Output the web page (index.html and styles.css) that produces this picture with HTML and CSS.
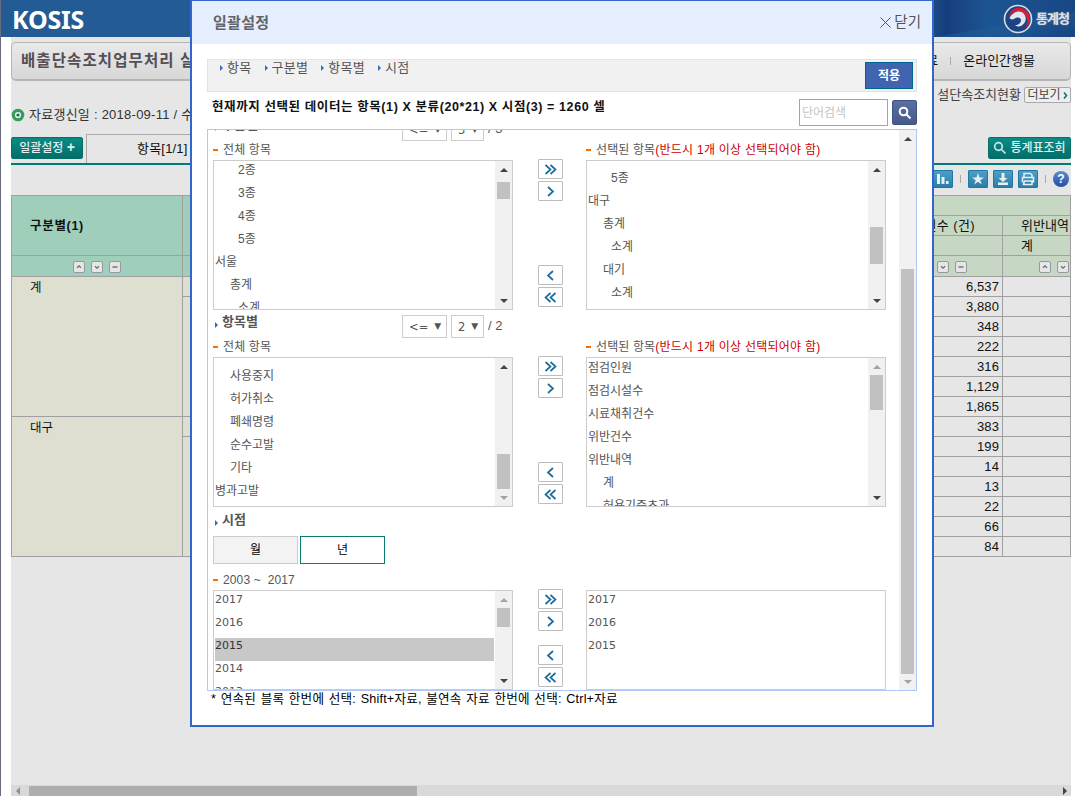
FILE: index.html
```html
<!DOCTYPE html>
<html lang="ko">
<head>
<meta charset="utf-8">
<title>KOSIS 일괄설정</title>
<link rel="stylesheet" href="styles.css">
</head>
<body>
<svg class="defs" width="0" height="0" aria-hidden="true">
  <symbol id="next" viewBox="0 0 13 13"><path d="M4 2l5 4.500-5 4.500"/></symbol>
  <symbol id="nextall" viewBox="0 0 13 13"><path d="M1.500 2l5 4.500-5 4.500M6.500 2l5 4.500-5 4.500"/></symbol>
  <symbol id="prev" viewBox="0 0 13 13"><path d="M9 2L4 6.500 9 11"/></symbol>
  <symbol id="prevall" viewBox="0 0 13 13"><path d="M6.500 2l-5 4.500 5 4.500M11.500 2l-5 4.500 5 4.500"/></symbol>
  <symbol id="lens" viewBox="0 0 14 14"><circle cx="5.500" cy="5.500" r="3.800"/><path d="M8.500 8.500L12.500 12.500"/></symbol>
</svg>
<div class="page">
  <header class="top">
    <span class="logo">KOSIS</span>
    <div class="agency">
      <svg width="30" height="30" viewBox="0 0 30 30"><circle cx="15" cy="15" r="13.500" fill="#1c4485" stroke="#d9dce2" stroke-width="1.600"/><path d="M6 13C7 6 13 3 18 4c6 1 9 6 9 11 0 4-2 7-5 9 3-5 3-9 0-13-4-5-11-5-16 2z" fill="#d32035"/><path d="M6.500 14c3-6 9-8 13-5.500 4 3 4 8 1.500 11-2.500 3-6.500 4-9 1.500 3 .5 5.500-1.500 6-4 .3-3-2-4-4-3.500-3 1-5 3.500-7.500.5z" fill="#e3e6ec"/></svg>
      <span>통계청</span>
    </div>
  </header>
  <main class="work">
    <div class="titlebar">
      <h1>배출단속조치업무처리 실</h1>
      <div class="links"><span>료</span><i></i><span>온라인간행물</span></div>
    </div>
    <div class="info">
      <div class="updated"><svg width="14" height="14" viewBox="0 0 14 14"><circle cx="7" cy="7" r="4.700" fill="#e9f3ec" stroke="#3a9a5c" stroke-width="3.200"/><circle cx="7" cy="7" r="1.600" fill="#156b65"/></svg><span>자료갱신일 : 2018-09-11 / 수</span></div>
      <div class="more"><span>설단속조치현황</span><b>더보기<svg width="5" height="7" viewBox="0 0 5 7"><path d="M1 .5l2.500 3L1 6.500" fill="none" stroke="#007c78" stroke-width="1.600"/></svg></b></div>
    </div>
    <div class="tabs">
      <button class="green set">일괄설정 <b>+</b></button>
      <div class="tab">항목[1/1]</div>
      <button class="green lookup"><svg width="14" height="14"><use href="#lens"/></svg>통계표조회</button>
    </div>
    <div class="tools">
      <span class="tool"><svg width="20" height="18" viewBox="0 0 20 18"><path d="M4 4h3v10H4zM8.500 7h3v7h-3zM13 11h2.500v3H13z" fill="#e6f0f4"/></svg></span>
      <i></i>
      <span class="tool"><svg width="20" height="18" viewBox="0 0 20 18"><path d="M10 3l1.500 4.500H16l-3.700 2.700 1.500 4.300-3.800-2.700-3.800 2.700 1.500-4.300L4 7.500h4.500z" fill="#e6f0f4"/></svg></span>
      <span class="tool"><svg width="20" height="18" viewBox="0 0 20 18"><path d="M8.500 3h3v5h3L10 12 5.500 8h3zM5 12.500h10V15H5z" fill="#e6f0f4"/></svg></span>
      <span class="tool"><svg width="20" height="18" viewBox="0 0 20 18"><path d="M6 7V3.500h6.500L14 5v2M4.500 12.500v-5h11v5M6.500 11h7.500v3.500H5.500z" fill="none" stroke="#e6f0f4" stroke-width="1.500"/></svg></span>
      <i></i>
      <span class="help">?</span>
    </div>
    <div class="table">
      <div class="lt">
        <div class="lh">구분별(1)</div><div class="lh"></div>
        <div class="ls"><span class="sort"><svg viewBox="0 0 12 12"><path d="M3.500 7L6 4.800 8.500 7"/></svg><svg viewBox="0 0 12 12"><path d="M3.500 5L6 7.200 8.500 5"/></svg><svg viewBox="0 0 12 12"><path d="M3 6h6"/></svg></span></div><div class="ls"></div>
        <div class="lc">계</div><div class="sub"></div>
        <div class="lc">대구</div><div class="sub"></div>
      </div>
      <div class="rt">
        <div class="rh wide"></div>
        <div class="rh first"><span>건수 (건)</span></div><div class="rh">위반내역</div>
        <div class="rh"></div><div class="rh">계</div>
        <div class="rh ic"><span class="sort"><svg viewBox="0 0 12 12"><path d="M3.500 5L6 7.200 8.500 5"/></svg><svg viewBox="0 0 12 12"><path d="M3 6h6"/></svg></span></div>
        <div class="rh ic end"><span class="sort"><svg viewBox="0 0 12 12"><path d="M3.500 7L6 4.800 8.500 7"/></svg><svg viewBox="0 0 12 12"><path d="M3.500 5L6 7.200 8.500 5"/></svg></span></div>
        <div class="num">6,537</div><div></div><div class="num">3,880</div><div></div><div class="num">348</div><div></div><div class="num">222</div><div></div><div class="num">316</div><div></div><div class="num">1,129</div><div></div><div class="num">1,865</div><div></div><div class="num">383</div><div></div><div class="num">199</div><div></div><div class="num">14</div><div></div><div class="num">13</div><div></div><div class="num">22</div><div></div><div class="num">66</div><div></div><div class="num">84</div><div></div>
      </div>
    </div>
    <div class="hbar"><u></u><div class="hthumb"></div><u class="r"></u></div>
  </main>
</div>

<section class="modal">
  <header class="mhead"><h2>일괄설정</h2><span class="close"><svg width="11" height="11" viewBox="0 0 11 11"><path d="M.5.5l10 10M10.500.5l-10 10" stroke="#555" fill="none"/></svg>닫기</span></header>
  <div class="mbody">
    <nav class="anchors">
      <span>항목</span><span>구분별</span><span>항목별</span><span>시점</span>
      <button class="apply">적용</button>
    </nav>
    <div class="status">
      <strong>현재까지 선택된 데이터는 항목(1) X 분류(20*21) X 시점(3) = 1260 셀</strong>
      <div class="search"><div class="field">단어검색</div><button class="go"><svg width="14" height="14"><use href="#lens"/></svg></button></div>
    </div>
    <div class="scroller">
      <div class="content">
        <div class="sec first"><h3>구분별</h3><div class="level"><span class="sel">&lt;=<em>▼</em></span><span class="sel two">3<em>▼</em></span>/ 3</div></div>
        <div class="labels"><span>전체 항목</span><span>선택된 항목<b>(반드시 1개 이상 선택되어야 함)</b></span></div>
        <div class="pair">
          <div class="list"><ul class="s1"><li class="d2">2종</li><li class="d2">3종</li><li class="d2">4종</li><li class="d2">5종</li><li>서울</li><li class="d1">총계</li><li class="d2">소계</li></ul><div class="sb p1"><u></u><s></s><u class="dn"></u></div></div>
          <div class="moves"><button><svg><use href="#nextall"/></svg></button><button><svg><use href="#next"/></svg></button><button class="back"><svg><use href="#prev"/></svg></button><button><svg><use href="#prevall"/></svg></button></div>
          <div class="list"><ul class="s2"><li class="d2">5종</li><li>대구</li><li class="d1">총계</li><li class="d2">소계</li><li class="d1">대기</li><li class="d2">소계</li></ul><div class="sb p2"><u></u><s></s><u class="dn"></u></div></div>
        </div>
        <div class="sec"><h3>항목별</h3><div class="level"><span class="sel">&lt;=<em>▼</em></span><span class="sel two">2<em>▼</em></span>/ 2</div></div>
        <div class="labels"><span>전체 항목</span><span>선택된 항목<b>(반드시 1개 이상 선택되어야 함)</b></span></div>
        <div class="pair">
          <div class="list"><ul class="s3"><li class="d1">사용중지</li><li class="d1">허가취소</li><li class="d1">폐쇄명령</li><li class="d1">순수고발</li><li class="d1">기타</li><li>병과고발</li></ul><div class="sb p3"><u></u><s></s><u class="dn off"></u></div></div>
          <div class="moves"><button><svg><use href="#nextall"/></svg></button><button><svg><use href="#next"/></svg></button><button class="back"><svg><use href="#prev"/></svg></button><button><svg><use href="#prevall"/></svg></button></div>
          <div class="list"><ul><li>점검인원</li><li>점검시설수</li><li>시료채취건수</li><li>위반건수</li><li>위반내역</li><li class="d1">계</li><li class="d1">허용기준초과</li></ul><div class="sb p4"><u class="off"></u><s></s><u class="dn"></u></div></div>
        </div>
        <div class="sec last"><h3>시점</h3></div>
        <div class="periods"><span>월</span><span class="on">년</span></div>
        <div class="labels range"><span>2003 ~&nbsp; 2017</span></div>
        <div class="pair short">
          <div class="list"><ul class="yr"><li>2017</li><li>2016</li><li class="hit">2015</li><li>2014</li><li>2013</li></ul><div class="sb p5"><u class="off"></u><s></s><u class="dn"></u></div></div>
          <div class="moves"><button><svg><use href="#nextall"/></svg></button><button><svg><use href="#next"/></svg></button><button class="back"><svg><use href="#prev"/></svg></button><button><svg><use href="#prevall"/></svg></button></div>
          <div class="list"><ul class="yr"><li>2017</li><li>2016</li><li>2015</li></ul></div>
        </div>
      </div>
      <div class="sb main"><u></u><s></s><u class="dn off"></u></div>
    </div>
    <p class="hint">* 연속된 블록 한번에 선택: Shift+자료, 불연속 자료 한번에 선택: Ctrl+자료</p>
  </div>
</section>
</body>
</html>
```

FILE: styles.css
```css
* { box-sizing: border-box; }
body { margin: 0; width: 1075px; height: 796px; overflow: hidden; background: #fff; font: 13px/20px "Liberation Sans", "Noto Sans CJK KR", sans-serif; color: #111; position: relative; }
h1, h2, h3, p, ul { margin: 0; padding: 0; }
li { list-style: none; }
button { font: inherit; padding: 0; margin: 0; }
.defs { position: absolute; }
symbol, .defs { fill: none; }

/* page behind the dialog */
.page { height: 796px; border-left: 1px solid #676c80; }
.top { height: 37px; background: linear-gradient(170deg, transparent 60%, #1f5c9c88 61%, transparent 90%) right / 142px 37px no-repeat, linear-gradient(90deg, #235b95 0 85%, #153f7c 88%, #1d5593 92%, #174783); display: flex; justify-content: space-between; align-items: center; padding: 0 6px 0 11px; }
.logo { font: bold 25px/36px "Noto Sans", sans-serif; color: #fff; letter-spacing: -0.2px; }
.agency { display: flex; align-items: center; gap: 3px; color: #ddd; font-weight: bold; font-size: 13px; letter-spacing: -1px; text-shadow: 0 0 1px #ccc; }
.work { height: 759px; margin: 0 4px 0 10px; background: #e6e6e6; display: flex; flex-direction: column; padding-top: 5px; white-space: nowrap; }
.titlebar { height: 39px; border: 1px solid #b5b5b5; border-bottom-width: 2px; border-radius: 5px; background: linear-gradient(#e9e9e9, #d7d7d7); display: flex; justify-content: space-between; align-items: center; padding: 0 35px 0 9px; }
.titlebar h1 { font-size: 15.500px; letter-spacing: 1.100px; color: #544e55; line-height: 34px; }
.links { display: flex; align-items: center; gap: 12px; font-size: 13px; }
.links i, .tools i { width: 1px; height: 8px; background: #aaa; }
.info { height: 53px; display: flex; justify-content: space-between; align-items: flex-start; color: #333; }
.updated { display: flex; align-items: center; gap: 4px; padding: 24px 0 0; letter-spacing: 0.25px; }
.more { display: flex; align-items: center; gap: 3px; padding-top: 4px; color: #444; }
.more b { font-weight: normal; font-size: 12px; width: 47px; height: 16px; border: 1px solid #aaa; border-radius: 2px; background: #eee; line-height: 14px; display: flex; align-items: center; justify-content: center; gap: 2px; }
.tabs { height: 31px; border-bottom: 2px solid #007c78; display: flex; align-items: flex-start; }
.green { border: 1px solid #086e69; border-radius: 2px; background: linear-gradient(#0a8b86, #046e69); color: #e3efee; height: 22px; margin-top: 3px; font-size: 12px; line-height: 20px; white-space: nowrap; font-weight: 500; }
.set { width: 72px; }
.set b { font-size: 14px; line-height: 12px; }
.tab { height: 29px; width: 110px; border: 1px solid #aaa; border-bottom: 0; margin-left: 3px; padding: 4px 0 0 50px; letter-spacing: 0.2px; }
.lookup { width: 83px; margin-left: auto; display: flex; align-items: center; justify-content: center; gap: 3px; }
.lookup svg, .go svg { fill: none; stroke: #fff; stroke-width: 2; }
.lookup svg { stroke: #cfe6e4; stroke-width: 1.700; }
.tools { height: 30px; display: flex; justify-content: flex-end; align-items: center; padding: 0 2px 2px 0; gap: 5px; }
.tools i { margin: 0 2px; }
.tool { width: 20px; height: 18px; border: 1px solid #1d78a6; background: linear-gradient(#4ca0c3, #2c7dab); display: flex; align-items: center; justify-content: center; border-radius: 1px; }
.tool svg { flex: none; }
.help { width: 16px; height: 16px; border-radius: 50%; background: linear-gradient(#5a8ed0, #284b9c); color: #fff; font-weight: bold; font-size: 12px; line-height: 16px; text-align: center; }
.table { display: flex; justify-content: space-between; }
.lt { width: 190px; display: grid; grid-template-columns: 171px 18px; grid-template-rows: 60px 21px 140px 140px; border: solid #a0a0a0; border-width: 1px 0 0 1px; }
.lt > div { border: solid #a0a0a0; border-width: 0 1px 1px 0; }
.lh, .ls { background: #9fcfbb; }
.lh { font-weight: bold; padding: 20px 0 0 18px; font-size: 12.500px; letter-spacing: 0.7px; }
.ls { display: flex; align-items: center; justify-content: center; padding: 2px 1px 0 0; }
.lc { background: #dedfd0; padding: 1px 0 0 18px; font-size: 12.500px; }
.sub { background: linear-gradient(#dedfd0 19px, #a0a0a0 19px 20px, #dedfd0 20px); }
.sort { display: flex; gap: 6px; }
.sort svg { width: 12px; height: 12px; border: 1px solid #9699a0; border-radius: 2px; background: #e6e6e6; fill: none; stroke: #6f747a; stroke-width: 1.600; }
.rt { width: 151px; display: grid; grid-template-columns: 82px 68px; grid-template-rows: 20px 20px 20px 21px; grid-auto-rows: 20px; border: solid #a0a0a0; border-width: 1px 0 0 1px; line-height: 20px; }
.rt > div { border: solid #a0a0a0; border-width: 0 1px 1px 0; }
.rh { background: #c6d8c4; padding-left: 18px; overflow: hidden; }
.rh.wide { grid-column: span 2; }
.rh.first { padding: 0 27px 0 0; display: flex; justify-content: flex-end; letter-spacing: 0.4px; }
.rh.ic { padding: 5px 0 0 16px; }
.rh.ic.end { padding-left: 36px; }
.num { text-align: right; padding-right: 3px; letter-spacing: 0.1px; }
.hbar { margin-top: auto; height: 11px; background: #d9d9d9; display: flex; align-items: center; gap: 9px; padding: 1px 4px 0 5px; }
.hthumb { width: 388px; height: 10px; background: #aeaeae; }
.hbar u { border: 4px solid transparent; border-right: 4px solid #919191; border-left: 0; }
.hbar u.r { border-right: 0; border-left: 4px solid #444; margin-left: auto; }

/* dialog */
.modal { position: absolute; left: 190px; top: 0; width: 744px; height: 727px; border: 2px solid #36c; border-top-width: 1px; background: #fff; color: #555; white-space: nowrap; }
.mhead { height: 43px; background: #e6efff; display: flex; justify-content: space-between; align-items: center; padding: 1px 11px 0 21px; }
.mhead h2 { font-size: 15px; color: #62646c; letter-spacing: 0.3px; }
.close { font-size: 14.500px; display: flex; align-items: center; gap: 3px; padding-bottom: 2px; }
.mbody { padding: 15px 15px 0; }
.anchors { height: 33px; border: 1px solid #e3e3e3; background: #f1f1f1; display: flex; align-items: flex-start; padding: 0 3px 0 12px; gap: 13px; line-height: 16px; letter-spacing: 0.3px; }
.anchors span, .sec h3 { display: flex; align-items: center; gap: 4px; }
.anchors span::before, .sec h3::before { content: ""; border: 3px solid transparent; border-left: 3px solid #2e6ec2; border-right: 0; }
.apply { margin: 2px 0 0 auto; width: 48px; height: 27px; border: 1px solid #006394; background: #4064b0; color: #fff; font-weight: bold; font-size: 12px; }
.status { height: 37px; display: flex; justify-content: space-between; align-items: flex-start; padding: 0 0 0 5px; }
.status strong { font-size: 12.500px; letter-spacing: 0.59px; color: #111; line-height: 20px; padding-top: 5px; }
.search { display: flex; align-items: center; gap: 4px; padding-top: 7px; }
.field { width: 89px; height: 27px; border: 1px solid #a5a5a5; color: #c4c4c4; padding: 4px 2px; font-size: 12px; line-height: 19px; }
.go { width: 25px; height: 25px; border: 1px solid #3d5483; border-radius: 2px; background: linear-gradient(#596fa4, #465b88); display: flex; align-items: center; justify-content: center; }
.scroller { height: 562px; border: 1px solid #b0c8f4; display: flex; overflow: hidden; }
.content { width: 691px; padding-left: 5px; height: 560px; overflow: hidden; }
.sec { height: 27px; display: flex; }
.sec h3 { font-size: 13px; height: 20px; width: 189px; padding-left: 2px; }
.sec h3::before { margin-top: 5px; }
.sec:not(.first) { padding-top: 2px; }
.sec.first { height: 10px; align-items: flex-end; }
.sec.first h3 { margin-bottom: 5px; }
.sec.first .level { margin-bottom: -1px; }
.sec.last { height: 29px; padding-top: 3px; }
.level { display: flex; gap: 4px; height: 23px; margin-top: 3px; line-height: 21px; flex: none; }
.sel { border: 1px solid #ccc; width: 45px; height: 23px; padding-left: 6px; font: 11.500px/22px "DejaVu Sans", sans-serif; }
.sel.two { width: 33px; }
.sel em { font-style: normal; font-size: 9px; margin-left: 6px; position: relative; top: -2px; }
.labels { height: 20px; display: grid; grid-template-columns: 373px 1fr; font-size: 12px; line-height: 18px; letter-spacing: 0.12px; }
.labels span { display: flex; align-items: center; }
.labels span::before { content: ""; width: 5px; height: 2px; background: #f47109; margin-right: 5px; }
.labels b { font-weight: normal; color: #c00; letter-spacing: 0.25px; }
.pair { display: grid; grid-template-columns: 300px 73px 300px; height: 150px; }
.list { border: 1px solid #ccc; display: flex; justify-content: space-between; overflow: hidden; padding-left: 1px; }
.list ul { flex: 1; font-size: 12px; line-height: 16px; }
.list li { height: 23px; padding: 2px 0 0; }
.list .d1 { padding-left: 15px; }
.list .d2 { padding-left: 23px; }
.s1 { margin-top: -1px; }
.s2 { margin-top: 7px; }
.s3 { margin-top: 8px; }
.yr { font-family: "DejaVu Sans", sans-serif; }
.list .yr { font-size: 11px; margin: 1px 1px 0 0; }
.list .yr li { padding-top: 0; }
.hit { background: #c8c8c8; color: #333; }
.sb { width: 17px; flex: none; background: #f1f1f1; display: flex; flex-direction: column; align-items: center; padding: 7px 0 6px; }
.sb u { border: 4px solid transparent; border-bottom: 4px solid #444; border-top: 0; }
.sb u.dn { border-top: 4px solid #444; border-bottom: 0; margin-top: auto; }
.sb u.off { border-bottom-color: #a3a3a3; }
.sb u.dn.off { border-top-color: #a3a3a3; border-bottom-color: transparent; }
.sb s { width: 13px; background: #c1c1c1; margin-top: 10px; height: 17px; }
.p2 s { margin-top: 55px; height: 37px; }
.p3 s { margin-top: 85px; height: 35px; }
.p4 s { margin-top: 6px; height: 35px; }
.p5 s { margin-top: 6px; height: 19px; }
.main s { margin-top: 128px; height: 405px; }
.moves { display: flex; flex-direction: column; align-items: center; gap: 2px; margin-top: -1px; padding-left: 2px; }
.moves button { width: 25px; height: 20px; border: 1px solid #bdbdbd; background: #fff; border-radius: 1px; display: flex; align-items: center; justify-content: center; }
.moves svg { width: 13px; height: 13px; fill: none; stroke: #1c6c9c; stroke-width: 1.700; }
.moves .back { margin-top: 62px; }
.periods { display: flex; gap: 2px; height: 28px; }
.periods span { width: 85px; border: 1px solid #ccc; background: #f3f3f3; color: #000; text-align: center; line-height: 26px; font-size: 12px; }
.periods .on { border-color: #0a7d72; background: #fff; }
.range { height: 26px; padding-top: 6px; }
.short { height: 100px; }
.short .back { margin-top: 12px; }
.hint { color: #000; padding-left: 4px; font-size: 12px; line-height: 16px; letter-spacing: 0.2px; word-spacing: 0.9px; font-size: 12.600px; }
```
